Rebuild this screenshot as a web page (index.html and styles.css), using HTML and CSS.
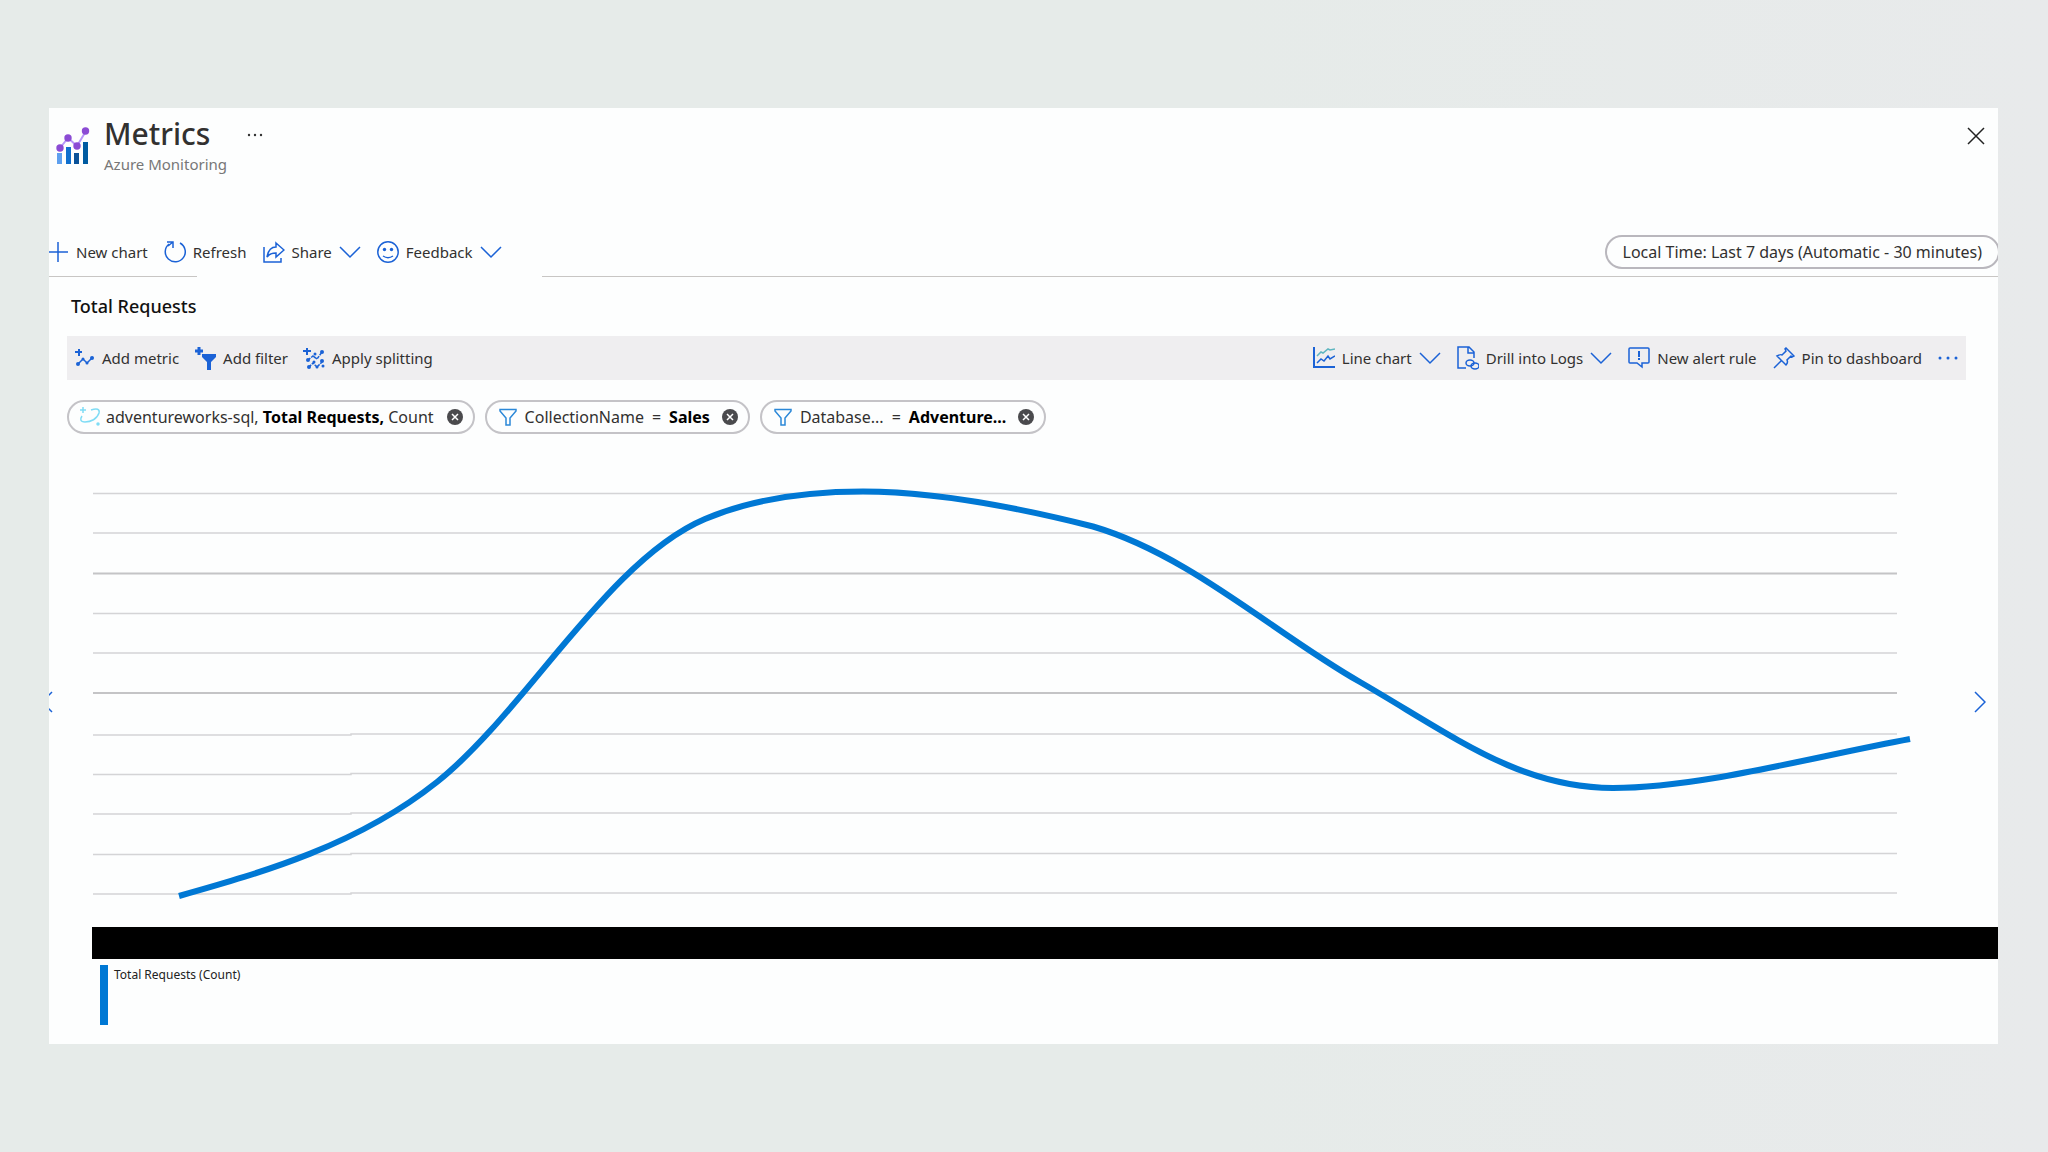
FILE: index.html
```html
<!DOCTYPE html>
<html lang="en">
<head>
<meta charset="utf-8">
<title>Metrics</title>
<link rel="stylesheet" href="styles.css">
</head>
<body>
<svg class="sprite" aria-hidden="true">
  <symbol id="chevron" viewBox="0 0 22 14"><path d="M1 2l10 10L21 2"/></symbol>
  <symbol id="funnel" viewBox="0 0 18 18"><path d="M1 1.500h16v1.500l-6 7v7H7v-7L1 3z"/></symbol>
  <symbol id="clear" viewBox="0 0 16 16"><circle cx="8" cy="8" r="8" fill="#4a4a4d" stroke="none"/><path d="M5 5l6 6M11 5l-6 6" stroke="#fff"/></symbol>
</svg>
<main class="blade">
  <header class="head">
    <svg class="logo" viewBox="0 0 34 38">
      <rect x="1" y="26" width="5" height="11" fill="#5ea0ef"/><rect x="10" y="20" width="5" height="17" fill="#0f6fce"/><rect x="18" y="26" width="5" height="11" fill="#0a5299"/><rect x="27" y="15" width="5" height="22" fill="#005ba1"/>
      <path d="M4 21l8-10 9 8 9-15" fill="none" stroke="#b796f9" stroke-width="2"/>
      <g fill="#8b4bd4"><circle cx="4" cy="21" r="3.700"/><circle cx="12" cy="11" r="3.700"/><circle cx="21" cy="19" r="3.700"/><circle cx="29.500" cy="4" r="3.700"/></g>
    </svg>
    <div class="titles">
      <h1>Metrics</h1>
      <p>Azure Monitoring</p>
    </div>
    <button class="more" aria-label="More options"><svg width="16" height="4" viewBox="0 0 16 4"><g fill="#333"><circle cx="2" cy="2" r="1.200"/><circle cx="8" cy="2" r="1.200"/><circle cx="14" cy="2" r="1.200"/></g></svg></button>
    <button class="close" aria-label="Close"><svg width="18" height="18" viewBox="0 0 18 18"><path d="M1 1l16 16M17 1L1 17" stroke="#222" stroke-width="1.500"/></svg></button>
  </header>

  <nav class="commands">
    <button><svg class="line" width="20" height="22" viewBox="0 0 20 22"><path d="M9 1v20M-1 11h20"/></svg>New chart</button>
    <button><svg class="line" width="22" height="24" viewBox="1 0 22 24"><path d="M6 4a10 10 0 1 0 11-1M4 2h6v6M10 2L5 6"/></svg>Refresh</button>
    <button><svg class="line" width="22" height="24" viewBox="1 0 22 24"><path d="M2 7v15h17v-4M14 3l8 7-8 7v-4c-4 0-7 1-9 4 1-6 4-10 9-10z"/></svg>Share<svg class="line" width="22" height="14"><use href="#chevron"/></svg></button>
    <button><svg class="line" width="22" height="24" viewBox="1 0 22 24"><circle cx="12" cy="12" r="10.200"/><path d="M7 16c3 2 7 2 10 0"/><g fill="#1b62d6" stroke="none"><circle cx="8.500" cy="9.500" r="1.700"/><circle cx="15.500" cy="9.500" r="1.700"/></g></svg>Feedback<svg class="line" width="22" height="14"><use href="#chevron"/></svg></button>
    <button class="time">Local Time: Last 7 days (Automatic - 30 minutes)</button>
  </nav>
  <div class="rule"><span></span><span></span></div>

  <section class="panel">
    <h2>Total Requests</h2>
    <div class="toolbar">
      <button><svg class="line" width="20" height="20" viewBox="0 0 20 20"><path d="M4 1v7M0 4h7" stroke-width="2"/><path d="M3 16l5-5 4 4 6-6"/><g fill="#1b62d6" stroke="none"><circle cx="3" cy="16" r="2"/><circle cx="8" cy="11" r="1.500"/><circle cx="12" cy="15" r="1.500"/><circle cx="17" cy="10" r="2"/></g></svg>Add metric</button>
      <button><svg class="line" width="22" height="24" viewBox="0 0 22 24"><path d="M5 1v8M1 5h8" stroke-width="3"/><path d="M8 8h14v3l-5 5v8h-4v-8l-5-5z" fill="#1b62d6" stroke="none"/></svg>Add filter</button>
      <button><svg class="line" width="22" height="24" viewBox="0 0 22 24"><path d="M4 2v7M0 5h8" stroke-width="2"/><g stroke-dasharray="3 1"><path d="M5 14l5-4 4 3 5-7M6 21l4-4 4 4 5-5M10 10l4 3"/></g><g fill="#1b62d6" stroke="none"><circle cx="19" cy="6" r="2"/><circle cx="12" cy="8" r="1.500"/><circle cx="5" cy="14" r="2"/><circle cx="6" cy="21" r="2"/><circle cx="14" cy="21" r="1.500"/><circle cx="20" cy="20" r="1.500"/><circle cx="19" cy="15" r="2"/><circle cx="11" cy="16" r="1.500"/></g></svg>Apply splitting</button>
      <div class="right">
        <button><svg class="line" width="22" height="22" viewBox="1 0 22 22"><path d="M2 0v20h21" stroke-width="2"/><path d="M5 16l4-4 3 2 4-5 2 3 5-3"/><path d="M5 9l4-4 2 1 5-4 2 1 5-1" stroke="#5fb6c0"/></svg>Line chart<svg class="line" width="22" height="14"><use href="#chevron"/></svg></button>
        <button><svg class="line" width="22" height="24" viewBox="0 0 22 24"><path d="M9 22H1V1h11l5 5v6M11 1v6h6"/><ellipse cx="13" cy="17" rx="4" ry="3"/><ellipse cx="18" cy="20" rx="4" ry="3"/></svg>Drill into Logs<svg class="line" width="22" height="14"><use href="#chevron"/></svg></button>
        <button><svg class="line" width="22" height="22" viewBox="0 0 22 22"><path d="M2 1h18q1 0 1 1v13q0 1-1 1h-6v4l-5-4H2q-1 0-1-1V2q0-1 1-1z"/><path d="M11 4v6M11 11v2" stroke-width="2"/></svg>New alert rule</button>
        <button><svg class="line" width="22" height="22" viewBox="0 0 22 22"><path d="M1 21l7-7M13 1l8 8-2 1-1-1-4 4c1 2 0 4-1 5L4 9c2-1 4-2 5-1l4-4-1-2z"/></svg>Pin to dashboard</button>
        <button aria-label="More"><svg width="20" height="4" viewBox="0 0 20 4"><g fill="#1b62d6"><circle cx="2" cy="2" r="1.500"/><circle cx="10" cy="2" r="1.500"/><circle cx="18" cy="2" r="1.500"/></g></svg></button>
      </div>
    </div>

    <div class="pills">
      <div class="pill metric"><svg width="22" height="20" viewBox="0 0 22 20" fill="none" stroke="#7fdcf5" stroke-width="1.500"><path d="M4 0v6M1 3h6M12 3c6-2 9-1 8 3-2 6-8 9-14 9-5 0-5-3-3-6"/><circle cx="19" cy="17" r="1" fill="#7fdcf5"/></svg><span>adventureworks-sql, <b>Total Requests,</b> Count</span><button aria-label="Remove metric"><svg class="line" width="16" height="16"><use href="#clear"/></svg></button></div>
      <div class="pill"><svg class="line funnel" width="18" height="18"><use href="#funnel"/></svg><span>CollectionName</span><span>=</span><b>Sales</b><button aria-label="Remove filter"><svg class="line" width="16" height="16"><use href="#clear"/></svg></button></div>
      <div class="pill"><svg class="line funnel" width="18" height="18"><use href="#funnel"/></svg><span>Database...</span><span>=</span><b>Adventure...</b><button aria-label="Remove filter"><svg class="line" width="16" height="16"><use href="#clear"/></svg></button></div>
    </div>
  </section>

  <section class="chart">
    <button class="prev" aria-label="Previous chart"><svg class="line" width="4" height="22" viewBox="0 0 4 22"><path d="M3 1l-10 10 10 10"/></svg></button>
    <svg class="plot" viewBox="0 0 1820 456" preserveAspectRatio="none">
      <g fill="none" stroke="#d4d4d6" stroke-width="1.500">
        <path d="M0 33.500H1804M0 73H1804M0 153.500H1804M0 193H1804"/>
        <path d="M0 275H258V274H1804M0 314.500H258V313.500H1804M0 354H258V353H1804M0 394.500H258V393.500H1804M0 434H258V433H1804"/>
        <path d="M0 113.500H1804M0 233H1804" stroke="#c4c4c6" stroke-width="2"/>
      </g>
      <path d="M86 436C171 412 265 385 344 322C432 252 515 100 612 59C659 39 715 31.500 770 31.500C843 31.500 927 48 1000 66.500C1097 95 1182 174 1267 222C1362 277 1427 328 1520 328C1607 328 1719 297 1817 279" fill="none" stroke="#0078d4" stroke-width="6"/>
    </svg>
    <button class="next" aria-label="Next chart"><svg class="line" width="12" height="22" viewBox="0 0 12 22"><path d="M1 1l10 10L1 21"/></svg></button>
  </section>
  <div class="axis"></div>
  <footer class="legend"><i></i><span>Total Requests (Count)</span></footer>
</main>
</body>
</html>
```
FILE: styles.css
```css
* { box-sizing: border-box; }
body {
  margin: 0;
  padding: 108px 50px 108px 49px;
  background: linear-gradient(90deg, #e6ebe9 60%, #e8eaeb);
  color: #323130;
  font: 16px/24px "Noto Sans", "Open Sans", sans-serif;
}
h1, h2, p { margin: 0; }
button {
  display: flex;
  align-items: center;
  gap: 7px;
  padding: 0;
  border: 0;
  background: none;
  color: inherit;
  font: inherit;
  white-space: nowrap;
}
svg { display: block; flex: none; }
.sprite { position: absolute; width: 0; height: 0; }
.line { fill: none; stroke: #1b62d6; stroke-width: 1.5; }
.blade { overflow: hidden; background: #fdfefe; }

.head { display: flex; align-items: flex-start; height: 116px; padding: 8px 13px 0 7px; }
.logo { width: 34px; height: 38px; margin-top: 11px; }
.titles { margin-left: 14px; }
h1 { font-size: 30px; line-height: 36px; font-weight: 500; }
.titles p { color: #777; font-size: 15px; }
.more { margin: 17px 0 0 20px; }
.close { margin: 11px 0 0 auto; }

.commands { display: flex; align-items: center; gap: 16px; height: 52px; padding-top: 4px; font-size: 15px; }
.commands .time {
  height: 34px;
  margin: 0 -2px 0 auto;
  padding: 0 16px;
  border: 2px solid #b9b7bd;
  border-radius: 17px;
  font-size: 16px;
}
.rule { display: flex; height: 1px; }
.rule span:first-child { width: 148px; background: #c8c6c4; }
.rule span:last-child { flex: 1; margin-left: 345px; background: #c8c6c4; }

.panel { padding: 16px 32px 0 18px; }
h2 { padding-left: 4px; color: #111; font-size: 18px; font-weight: 500; line-height: 26px; }
.toolbar { display: flex; align-items: center; gap: 15px; height: 44px; margin-top: 17px; padding: 0 8px; background: #efeef0; font-size: 15px; }
.right { display: flex; gap: 16px; margin-left: auto; }
.pills { display: flex; gap: 10px; margin-top: 20px; }
.pill { display: flex; align-items: center; gap: 8px; height: 34px; padding: 0 10px 0 12px; border: 2px solid #c4c3c7; border-radius: 17px; white-space: nowrap; }
.pill b { color: #000; }
.pill button { margin-left: 4px; }
.pill.metric { gap: 5px; padding-left: 10px; }
.pill.metric button { margin-left: 8px; }
.funnel { stroke: #2b88d8; }

.chart { display: flex; align-items: center; margin-top: 26px; }
.plot { flex: 1; min-width: 0; height: 456px; margin-left: 40px; }
.prev { margin-top: 28px; }
.next { margin: 28px 12px 0 61px; }
.axis { height: 32px; margin: 11px 0 0 43px; background: #000; }
.legend { display: flex; gap: 6px; margin: 6px 0 0 51px; padding-bottom: 19px; color: #222; font-size: 12px; line-height: 20px; }
.legend i { width: 8px; height: 60px; background: #0078d4; }
```
